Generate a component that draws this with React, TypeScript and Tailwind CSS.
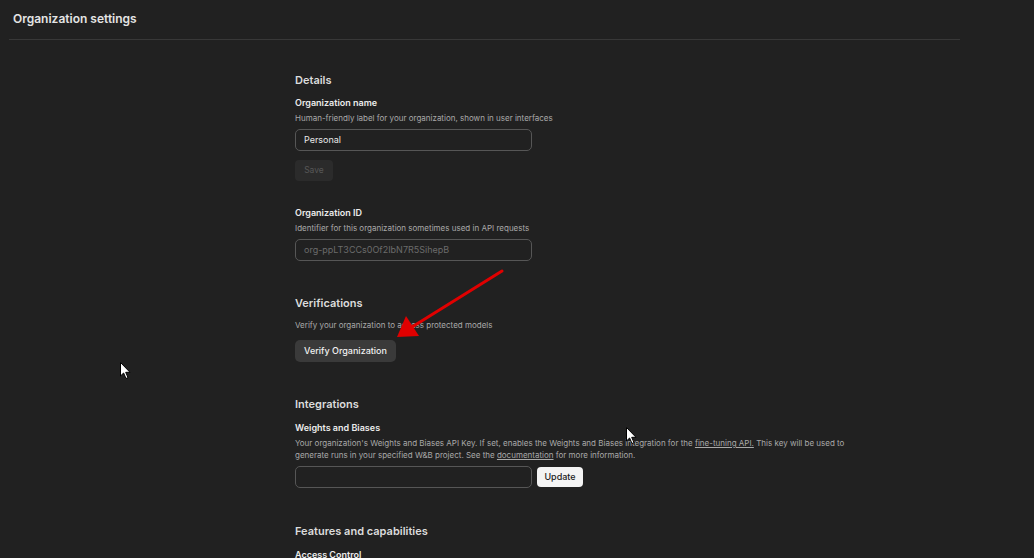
import React from "react";

function Section({ title, children }: { title: string; children: React.ReactNode }) {
  return (
    <section className="flex flex-col">
      <h2 className="text-[11px] font-semibold text-[#dcdcdc] leading-[14px]">{title}</h2>
      {children}
    </section>
  );
}

function FieldLabel({ label, hint }: { label: string; hint?: React.ReactNode }) {
  return (
    <div className="flex flex-col">
      <div className="text-[9px] font-semibold text-[#ececec] leading-[12px]">{label}</div>
      {hint && <div className="mt-[3px] text-[8px] text-[#a9a9a9] leading-[12px]">{hint}</div>}
    </div>
  );
}

function TextBox({ value, muted }: { value?: string; muted?: boolean }) {
  return (
    <div
      className={`flex h-[22px] w-[237px] items-center rounded-[5px] border border-[#565656] px-2 text-[9px] ${
        muted ? "text-[#6b6b6b]" : "text-[#e8e8e8]"
      }`}
    >
      {value}
    </div>
  );
}

function Cursor({ className }: { className: string }) {
  return (
    <svg className={`absolute ${className}`} width="12" height="18" viewBox="0 0 12 18">
      <path d="M0.5 0.5 L0.5 14 L3.6 11 L6 16.5 L8 15.6 L5.7 10.3 L10 10.3 Z" fill="#fff" stroke="#000" strokeWidth="1" />
    </svg>
  );
}

export default function App() {
  return (
    <div
      className="relative h-[558px] w-[1034px] overflow-hidden bg-[#212121]"
      style={{ fontFamily: "Inter, 'Liberation Sans', sans-serif" }}
    >
      <header className="ml-[9px] w-[951px] border-b border-[#383838] pb-[12px] pl-[4px] pt-[11px]">
        <h1 className="text-[12px] font-semibold text-[#e4e4e4] leading-[16px]">
          Organization settings
        </h1>
      </header>

      <main className="ml-[295px] flex w-[550px] flex-col pt-[33px]">
        <Section title="Details">
          <div className="mt-[10px]">
            <FieldLabel
              label="Organization name"
              hint="Human-friendly label for your organization, shown in user interfaces"
            />
          </div>
          <div className="mt-[5px]">
            <TextBox value="Personal" />
          </div>
          <button className="mt-[9px] h-[21px] w-[38px] rounded-[4px] bg-[#2b2b2b] text-[8.5px] text-[#575757]">
            Save
          </button>

          <div className="mt-[26px]">
            <FieldLabel
              label="Organization ID"
              hint="Identifier for this organization sometimes used in API requests"
            />
          </div>
          <div className="mt-[5px]">
            <TextBox value="org-ppLT3CCs0Of2IbN7R5SihepB" muted />
          </div>
        </Section>

        <div className="mt-[35px]">
          <Section title="Verifications">
            <div className="mt-[9px] text-[8px] text-[#a9a9a9] leading-[12px]">
              Verify your organization to access protected models
            </div>
            <button className="mt-[9px] h-[22px] w-[101px] rounded-[5px] bg-[#3a3a3a] text-[9px] font-medium text-[#f0f0f0]">
              Verify Organization
            </button>
          </Section>
        </div>

        <div className="mt-[35px]">
          <Section title="Integrations">
            <div className="mt-[11px]">
              <FieldLabel
                label="Weights and Biases"
                hint={
                  <>
                    Your organization's Weights and Biases API Key. If set, enables the Weights and
                    Biases integration for the <span className="underline">fine-tuning API.</span> This
                    key will be used to generate runs in your specified W&amp;B project. See the{" "}
                    <span className="underline">documentation</span> for more information.
                  </>
                }
              />
            </div>
            <div className="mt-[5px] flex items-center gap-[5px]">
              <TextBox />
              <button className="h-[20px] w-[46px] rounded-[4px] bg-[#f4f4f4] text-[9px] font-medium text-[#1a1a1a]">
                Update
              </button>
            </div>
          </Section>
        </div>

        <div className="mt-[36px]">
          <Section title="Features and capabilities">
            <div className="mt-[11px]">
              <FieldLabel label="Access Control" />
            </div>
          </Section>
        </div>
      </main>

      {/* annotation arrow */}
      <svg className="absolute left-0 top-0" width="1034" height="558" viewBox="0 0 1034 558">
        <line x1="502" y1="271" x2="412" y2="327" stroke="#e00000" strokeWidth="3" strokeLinecap="round" />
        <polygon points="397,337 406,316 419,336" fill="#e00000" />
      </svg>

      <Cursor className="left-[120px] top-[362px]" />
      <Cursor className="left-[626px] top-[427px]" />
    </div>
  );
}
